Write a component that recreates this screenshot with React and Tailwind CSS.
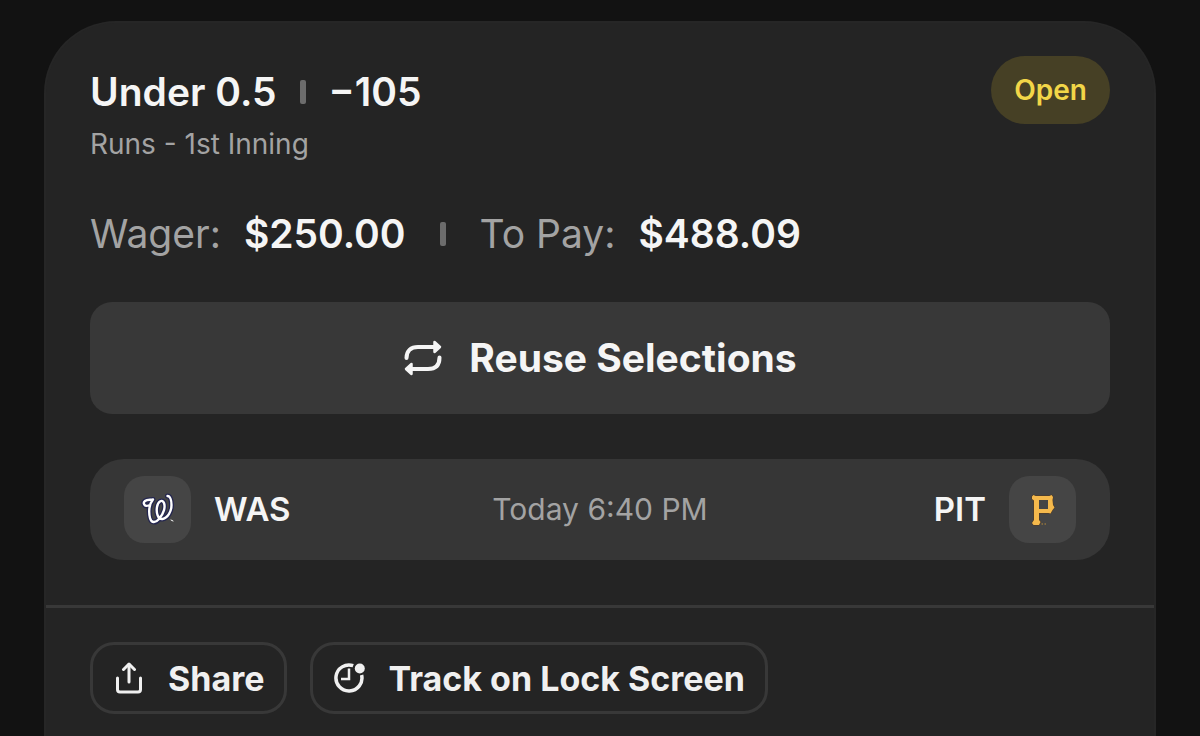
import { useState } from 'react';

const RepeatIcon = () => (
  <svg className="h-10 w-10" viewBox="0 0 40 40" fill="none" stroke="currentColor" strokeWidth="4" strokeLinecap="round" strokeLinejoin="round" aria-hidden="true">
    <path d="M3.5 20C3.5 12.5 8 9 15 9H32" />
    <path d="M36.5 19.5C36.5 27.5 32 31 25 31H8" />
    <path d="M31.5 4L37 9L31.5 14Z" fill="currentColor" strokeWidth="2.5" />
    <path d="M8.5 26L3 31L8.5 36Z" fill="currentColor" strokeWidth="2.5" />
  </svg>
);

const ShareIcon = () => (
  <svg className="h-8 w-8" viewBox="0 0 32 32" fill="none" stroke="currentColor" strokeWidth="3" strokeLinecap="round" strokeLinejoin="round" aria-hidden="true">
    <path d="M16 20V2.5" />
    <path d="M10.5 7.5L16 2L21.5 7.5" />
    <path d="M4.5 16V27.5C4.5 29 5.5 30 7 30H25C26.5 30 27.5 29 27.5 27.5V16" />
  </svg>
);

const ClockIcon = () => (
  <svg className="h-8 w-8" viewBox="0 0 32 32" fill="none" stroke="currentColor" strokeWidth="3.5" aria-hidden="true">
    <path d="M20.2 3.7A13 13 0 1 0 28.6 13" />
    <path d="M16 6.5V17H8" strokeWidth="2.5" />
    <circle cx="26.8" cy="6.5" r="5" fill="currentColor" stroke="none" />
  </svg>
);

const nationalsPath =
  'M12.5 17.5C8.5 19 6.5 15 9 13C11 11.5 14 12 17 11.5C13 16 12.5 24 14 30C15.5 36 20 34.5 23 31C28 25.5 29.5 19 28 15C26.5 11 22 13 21 19C20 25 22 31.5 26.5 31C32 30 35.5 23 35.5 17C35.5 12 34 8 31.5 8';

const NationalsLogo = () => (
  <svg className="h-11 w-11" viewBox="0 0 44 44" fill="none" strokeLinecap="round" strokeLinejoin="round" role="img" aria-label="Washington">
    <path d={nationalsPath} stroke="#24264f" strokeWidth="5" />
    <path d={nationalsPath} stroke="#ffffff" strokeWidth="2.4" />
    <path d="M35 32L37 33" stroke="#ffffff" />
  </svg>
);

const PiratesLogo = () => (
  <svg className="h-11 w-11" viewBox="0 0 44 44" role="img" aria-label="Pittsburgh">
    <path
      d="M11 8.5L12.5 7L14.5 8H28.5L30.5 7L32 9L31.5 12L32 17L33.5 19.5L31.5 22L29.5 25.5L27.5 25H18V32L19.5 34L18 37H12.5L11 35L13 32V12.5L11 11Z"
      fill="#f5b94c"
      stroke="#54391c"
      strokeWidth="1"
      paintOrder="stroke"
    />
    <path d="M18 12H27V21H18Z" fill="#454545" />
    <path d="M20.5 36H22M23.5 36H25" stroke="#b88b3b" />
  </svg>
);

const Separator = () => <span className="h-6 w-[6px] rounded-xs bg-[#6c6c6c]" />;

const TeamBadge = ({ children }) => (
  <span className="flex size-[67px] items-center justify-center rounded-[20px] bg-[#454545]">{children}</span>
);

const OutlineButton = ({ icon, label, pressed, onClick }) => (
  <button
    type="button"
    aria-pressed={pressed}
    onClick={onClick}
    className="flex h-[72px] items-center gap-[23px] rounded-3xl border-3 border-[#383838] px-5 text-[34px] font-bold text-[#f0f0f0]"
  >
    {icon}
    {label}
  </button>
);

const BetCard = () => {
  const [tracking, setTracking] = useState(false);

  return (
    <article className="flex-1 rounded-t-[72px] border-x-2 border-t-2 border-[#262626] bg-[#242424] text-[#f5f5f5]">
      <div className="px-11 pt-[33px]">
        {/* Selection */}
        <header className="flex items-start justify-between">
          <div className="pt-3">
            <h1 className="flex items-center gap-[23px] text-[39px] leading-12 font-semibold">
              <span>Under 0.5</span>
              <Separator />
              <span>−105</span>
            </h1>
            <p className="mt-3 text-[28px] leading-8 text-[#a3a3a3]">Runs - 1st Inning</p>
          </div>
          <span className="rounded-full bg-[#464025] px-[23px] text-[28px] leading-[68px] font-semibold text-[#f2d648]">
            Open
          </span>
        </header>

        {/* Wager and payout */}
        <dl className="mt-[50px] flex items-center text-[39px] leading-12">
          <dt className="mr-[23px] font-normal text-[#a3a3a3]">Wager:</dt>
          <dd className="mr-[34px] font-semibold">$250.00</dd>
          <Separator />
          <dt className="mr-[23px] ml-[34px] font-normal text-[#a3a3a3]">To Pay:</dt>
          <dd className="font-semibold">$488.09</dd>
        </dl>

        <button
          type="button"
          className="mt-11 flex h-28 w-full items-center justify-center gap-[26px] rounded-[22px] bg-[#383838] text-[39px] font-bold"
        >
          <RepeatIcon />
          Reuse Selections
        </button>

        {/* Matchup */}
        <section className="mt-[45px] grid grid-cols-3 items-center rounded-[34px] bg-[#363636] px-[34px] py-[17px] text-[33px] font-semibold">
          <div className="flex items-center gap-[23px]">
            <TeamBadge>
              <NationalsLogo />
            </TeamBadge>
            WAS
          </div>
          <time className="text-center text-[30px] font-normal text-[#a3a3a3]">Today 6:40 PM</time>
          <div className="flex items-center justify-end gap-[23px]">
            PIT
            <TeamBadge>
              <PiratesLogo />
            </TeamBadge>
          </div>
        </section>
      </div>

      <footer className="mt-[45px] flex gap-[23px] border-t-3 border-[#383838] px-11 pt-[34px]">
        <OutlineButton icon={<ShareIcon />} label="Share" />
        <OutlineButton
          icon={<ClockIcon />}
          label="Track on Lock Screen"
          pressed={tracking}
          onClick={() => setTracking(!tracking)}
        />
      </footer>
    </article>
  );
};

function App() {
  return (
    <main className="flex min-h-screen flex-col bg-[#121212] px-11 pt-[21px] font-['Inter',sans-serif]">
      <BetCard />
    </main>
  );
}

export default App
